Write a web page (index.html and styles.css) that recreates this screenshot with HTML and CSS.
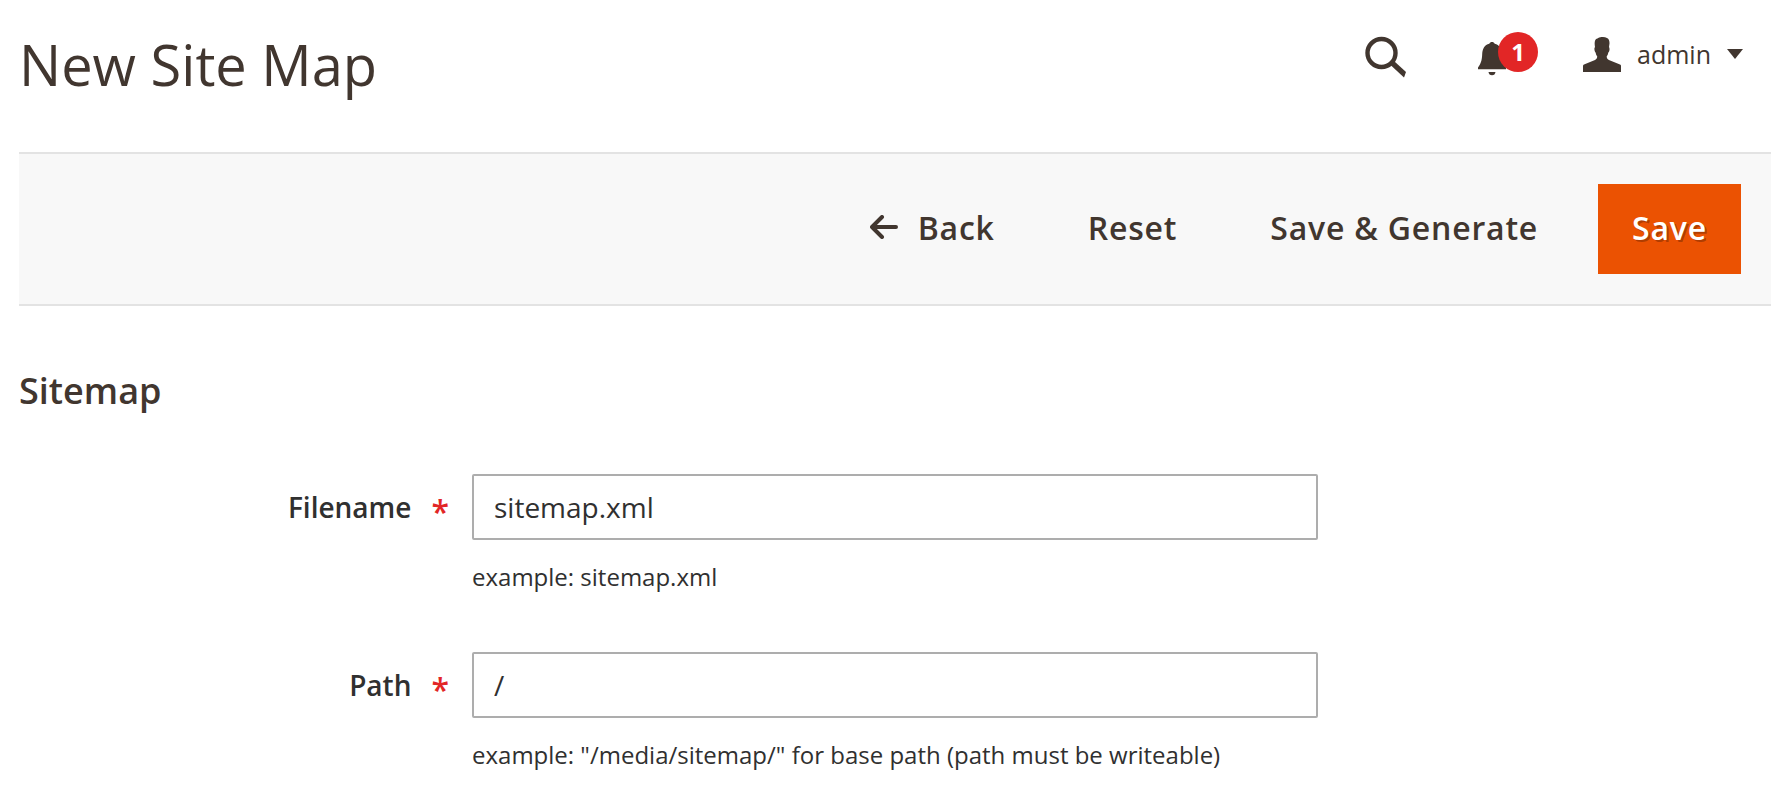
FILE: index.html
```html
<!DOCTYPE html>
<html lang="en">
<head>
    <meta charset="UTF-8">
    <meta name="viewport" content="width=device-width, initial-scale=1.0">
    <title>New Site Map</title>
    <link rel="stylesheet" href="styles.css">
</head>
<body>

<header class="page-header">
    <h1 class="page-title">New Site Map</h1>

    <div class="header-tools">
        <button type="button" class="tool" aria-label="Search">
            <svg viewBox="0 0 42 42" width="42" height="42">
                <circle cx="16.500" cy="17" r="14" fill="none" stroke="currentColor" stroke-width="4.400"/>
                <path d="M25.500 29 L29 25 L41 36 L39 41.500 Z" fill="currentColor"/>
            </svg>
        </button>

        <a href="#" class="tool notifications" aria-label="Notifications">
            <svg viewBox="0 0 30 36" width="30" height="36">
                <path d="M12.300 1.800 C12.800 .6 13.800 0 15 0 C16.200 0 17.200 .6 17.700 1.800 C22.500 3 24.400 6.500 24.800 12 C25 19 26.500 22 29 25.500 V27.300 H1 V25.500 C3.500 22 5 19 5.200 12 C5.600 6.500 7.500 3 12.300 1.800 Z" fill="currentColor"/>
                <path d="M11.500 30 H18.500 C18.300 32 17 33.300 15 33.300 C13 33.300 11.700 32 11.500 30 Z" fill="currentColor"/>
            </svg>
            <span class="badge">1</span>
        </a>

        <button type="button" class="tool account">
            <svg viewBox="0 0 38 35" width="38" height="35">
                <path d="M0 35 V29 C0 28.200 .4 27.800 1 27.500 L12 23 C13.600 22.200 14.200 21 14.200 19.300 C13.300 18.300 12.900 17.300 12.700 15.800 C11.600 14.800 11.200 12.800 11.500 10.900 C11.600 10.500 11.900 10.300 12 10 C11.600 7.500 11.400 5.200 12.200 3.200 C13 1.800 14.200 1.700 15.200 1 C17.500 0 21.500 -.4 24 1 C26 2 26.600 4 26.500 6.500 L26 10 C27 11.800 26.500 14.300 25.200 15.800 C25 17.300 24.600 18.300 23.700 19.300 C23.700 21 24.300 22.200 25.900 23 L37 27.500 C37.600 27.800 38 28.200 38 29 V35 Z" fill="currentColor"/>
            </svg>
            <span>admin</span>
            <svg viewBox="0 0 16 10" width="16" height="10">
                <path d="M0 0 H16 L8 10 Z" fill="currentColor"/>
            </svg>
        </button>
    </div>
</header>

<div class="page-actions">
    <button type="button" class="action">
        <svg viewBox="0 0 28 24" width="28" height="24" fill="none" stroke="currentColor" stroke-width="4" stroke-linecap="round" stroke-linejoin="round">
            <path d="M12 2 L2 12 L12 22 M2.500 12 H26"/>
        </svg>
        Back
    </button>
    <button type="reset" form="sitemap-form" class="action">Reset</button>
    <button type="submit" form="sitemap-form" class="action">Save &amp; Generate</button>
    <button type="submit" form="sitemap-form" class="action primary">Save</button>
</div>

<form id="sitemap-form" class="sitemap-form">
    <h2 class="section-title">Sitemap</h2>

    <div class="field">
        <label for="filename">Filename</label>
        <div class="control">
            <input type="text" id="filename" value="sitemap.xml" required>
            <div class="note">example: sitemap.xml</div>
        </div>
    </div>

    <div class="field">
        <label for="path">Path</label>
        <div class="control">
            <input type="text" id="path" value="/" required>
            <div class="note">example: "/media/sitemap/" for base path (path must be writeable)</div>
        </div>
    </div>
</form>

</body>
</html>
```
FILE: styles.css
```css
body {
    margin: 0;
    padding: 0 15px 0 19px;
    background-color: #fff;
    color: #303030;
    font-family: "Open Sans", "Noto Sans", sans-serif;
    font-size: 28px;
}

button,
input {
    font-family: inherit;
}

button {
    padding: 0;
    background: none;
    border: none;
    color: inherit;
    cursor: pointer;
}

.page-header {
    display: flex;
    justify-content: space-between;
    align-items: flex-start;
    height: 152px;
    color: #41362f;
}

.page-title {
    margin: 26px 0 0;
    font-size: 56px;
    font-weight: 400;
    line-height: 76px;
}

.header-tools {
    display: flex;
    gap: 70px;
    padding: 32px 28px 0 0;
}

.tool {
    display: flex;
    align-items: flex-end;
    height: 46px;
    color: inherit;
}

.notifications {
    position: relative;
    width: 36px;
}

.badge {
    position: absolute;
    top: 0;
    left: 21px;
    width: 40px;
    border-radius: 50%;
    background-color: #e22626;
    color: #fff;
    font-size: 24px;
    font-weight: 700;
    line-height: 40px;
    text-align: center;
}

.account {
    align-items: center;
    gap: 16px;
    height: 44px;
    font-size: 25px;
    line-height: 36px;
}

/* Toolbar */
.page-actions {
    display: flex;
    justify-content: flex-end;
    padding: 30px;
    background-color: #f8f8f8;
    border-top: 2px solid #e3e3e3;
    border-bottom: 2px solid #e3e3e3;
}

.action {
    display: flex;
    align-items: center;
    gap: 20px;
    height: 90px;
    margin-right: 27px;
    padding: 0 33px 4px;
    color: #41362f;
    font-size: 32px;
    font-weight: 600;
    letter-spacing: 0.025em;
}

.primary {
    margin: 0;
    padding: 0 34px 4px;
    background-color: #eb5202;
    color: #fff;
    text-shadow: 2px 2px 0 rgba(0, 0, 0, 0.25);
}

/* Form */
.section-title {
    margin: 63px 0 61px;
    color: #41362f;
    font-size: 36px;
    font-weight: 600;
    line-height: 44px;
}

.field {
    display: grid;
    grid-template-columns: 453fr 846fr 453fr;
    margin-bottom: 58px;
}

.field label {
    display: flex;
    justify-content: flex-end;
    gap: 20px;
    height: 66px;
    padding-right: 23px;
    font-weight: 600;
    line-height: 66px;
}

.field label::after {
    content: "*";
    color: #e22626;
    font-size: 32px;
    line-height: 76px;
}

.field input {
    box-sizing: border-box;
    width: 100%;
    height: 66px;
    padding: 0 20px;
    border: 2px solid #adadad;
    border-radius: 2px;
    background-color: #fff;
    color: #303030;
    font-size: 28px;
}

.note {
    margin-top: 20px;
    font-size: 24px;
    line-height: 34px;
}
```
